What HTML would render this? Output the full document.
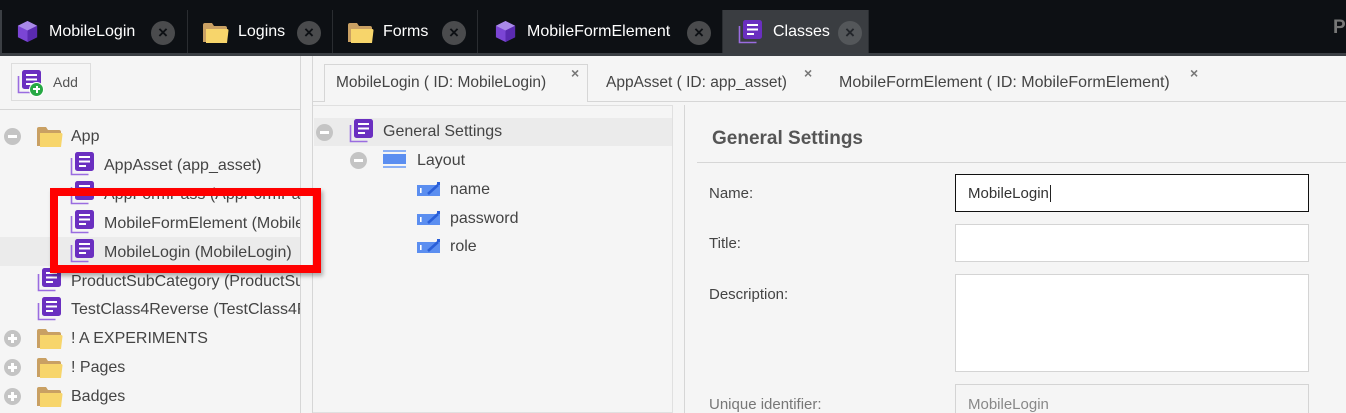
<!DOCTYPE html>
<html><head><meta charset="utf-8">
<style>
*{box-sizing:border-box;margin:0;padding:0}
html,body{width:1346px;height:413px;overflow:hidden}
body{background:#f5f5f5;font-family:"Liberation Sans",sans-serif;position:relative;color:#3c3c3c}
.a{position:absolute}
.top{left:0;top:0;width:1346px;background:#0d1014;border-bottom:3px solid #3b3f44;height:56px}
.tab{top:10px;height:43px;color:#fff;font-size:16px;line-height:43px;border-right:1px solid #2a2d31}
.x{width:24px;height:24px;border-radius:12px;background:#4a4b4d;top:10px;color:#0d1014;font-size:17px;line-height:24px;text-align:center;font-weight:bold}
.t{font-size:16px;color:#444;white-space:nowrap}
.row{font-size:16px;color:#444;white-space:nowrap;line-height:20px}
.lbl{font-size:15px;color:#444;left:709px}
.inp{left:955px;width:354px;background:#fff;border:1px solid #d4d4d4}
.mi{width:17px;height:17px;border-radius:9px;background:#c4c4c4}
.mi:after{content:"";position:absolute;left:4px;top:7px;width:9px;height:3px;background:#fff}
.pl:before{content:"";position:absolute;left:7px;top:4px;width:3px;height:9px;background:#fff}
</style></head><body>
<svg width="0" height="0" style="position:absolute">
<defs>
<symbol id="cls" viewBox="0 0 24 24"><path d="M1.5 6v16.5h17" fill="none" stroke="#9a6ce0" stroke-width="1.6"/><rect x="5" y="0" width="19" height="19" rx="2.5" fill="#6a2fc0"/><rect x="9" y="4" width="11" height="2" fill="#fff"/><rect x="9" y="8.5" width="11" height="2" fill="#fff"/><rect x="9" y="13" width="7" height="2" fill="#fff"/></symbol>
<symbol id="fld" viewBox="0 0 26 22"><path d="M0 3a2 2 0 0 1 2-2h7l2 3h11a2 2 0 0 1 2 2v14H0z" fill="#c9a063"/><path d="M3 7h21a1.5 1.5 0 0 1 1.5 1.5L24 21H3z" fill="#f7d56b"/></symbol>
<symbol id="cube" viewBox="0 0 24 24"><path d="M12 1L22 6v12l-10 5L2 18V6z" fill="#7b45d4"/><path d="M12 1L22 6 12 11 2 6z" fill="#a98ae8"/><path d="M12 11L22 6v12l-10 5z" fill="#5a2ab0"/></symbol>
<symbol id="fe" viewBox="0 0 24 14"><rect x="0" y="3" width="23" height="11" fill="#5b8ef0"/><rect x="3" y="6" width="1.6" height="5" fill="#fff"/><path d="M11 12L21 3" stroke="#2a5fd8" stroke-width="2.6"/><rect x="20" y="0" width="3" height="3" fill="#2a5fd8"/></symbol>
</defs></svg>

<div class="a top"></div>
<div class="a" style="left:0;top:10px;width:2px;height:43px;background:#3b3f44"></div>
<div class="a tab" style="left:0;width:188px"></div>
<svg class="a" style="left:16px;top:20px" width="23" height="23"><use href="#cube"/></svg>
<div class="a tab" style="left:49px;border:0">MobileLogin</div><div class="a x" style="left:151px;top:21px">×</div>
<div class="a tab" style="left:188px;width:145px"></div>
<svg class="a" style="left:203px;top:22px" width="26" height="22"><use href="#fld"/></svg>
<div class="a tab" style="left:238px;border:0">Logins</div><div class="a x" style="left:297px;top:21px">×</div>
<div class="a tab" style="left:333px;width:145px"></div>
<svg class="a" style="left:348px;top:22px" width="26" height="22"><use href="#fld"/></svg>
<div class="a tab" style="left:383px;border:0">Forms</div><div class="a x" style="left:442px;top:21px">×</div>
<div class="a tab" style="left:478px;width:245px"></div>
<svg class="a" style="left:494px;top:20px" width="23" height="23"><use href="#cube"/></svg>
<div class="a tab" style="left:527px;border:0">MobileFormElement</div><div class="a x" style="left:687px;top:21px">×</div>
<div class="a tab" style="left:723px;width:146px;background:#3a3d41"></div>
<svg class="a" style="left:738px;top:20px" width="24" height="24"><use href="#cls"/></svg>
<div class="a tab" style="left:773px;border:0">Classes</div><div class="a x" style="left:838px;top:21px;background:#54575a;color:#22252a">×</div>
<div class="a" style="left:1333px;top:17px;color:#777;font-size:19px;font-weight:bold">P</div>

<!-- left panel -->
<div class="a" style="left:0;top:56px;width:300px;height:357px;overflow:hidden">
<div class="a" style="left:0;top:53px;width:300px;height:1px;background:#d6d6d6"></div>
<div class="a" style="left:11px;top:7px;width:80px;height:38px;border:1px solid #ddd;background:#f5f5f5"></div>
<svg class="a" style="left:17px;top:14px" width="24" height="24"><use href="#cls"/></svg>
<div class="a" style="left:29px;top:26px;width:15px;height:15px;border-radius:8px;background:#27a844;border:1px solid #fff"></div>
<div class="a" style="left:33px;top:32px;width:7px;height:2px;background:#fff"></div><div class="a" style="left:35.5px;top:29.5px;width:2px;height:7px;background:#fff"></div>
<div class="a" style="left:53px;top:18px;font-size:14px;color:#555">Add</div>

<div class="a" style="left:0;top:181px;width:300px;height:29px;background:#ebebeb"></div>
<div class="a mi" style="left:4px;top:72px"></div>
<svg class="a" style="left:37px;top:70px" width="26" height="22"><use href="#fld"/></svg>
<div class="a row" style="left:71px;top:71px">App</div>
<svg class="a" style="left:70px;top:96px" width="24" height="24"><use href="#cls"/></svg>
<div class="a row" style="left:104px;top:100px">AppAsset (app_asset)</div>
<svg class="a" style="left:70px;top:125px" width="24" height="24"><use href="#cls"/></svg>
<div class="a row" style="left:104px;top:129px">AppFormPass (AppFormPass)</div>
<svg class="a" style="left:70px;top:154px" width="24" height="24"><use href="#cls"/></svg>
<div class="a row" style="left:104px;top:158px">MobileFormElement (MobileFormElement)</div>
<svg class="a" style="left:70px;top:183px" width="24" height="24"><use href="#cls"/></svg>
<div class="a row" style="left:104px;top:187px">MobileLogin (MobileLogin)</div>
<svg class="a" style="left:37px;top:212px" width="24" height="24"><use href="#cls"/></svg>
<div class="a row" style="left:71px;top:216px">ProductSubCategory (ProductSubCategory)</div>
<svg class="a" style="left:37px;top:241px" width="24" height="24"><use href="#cls"/></svg>
<div class="a row" style="left:71px;top:244px">TestClass4Reverse (TestClass4Reverse)</div>
<div class="a mi pl" style="left:4px;top:274px"></div>
<svg class="a" style="left:37px;top:272px" width="26" height="22"><use href="#fld"/></svg>
<div class="a row" style="left:71px;top:273px">! A EXPERIMENTS</div>
<div class="a mi pl" style="left:4px;top:303px"></div>
<svg class="a" style="left:37px;top:301px" width="26" height="22"><use href="#fld"/></svg>
<div class="a row" style="left:71px;top:302px">! Pages</div>
<div class="a mi pl" style="left:4px;top:332px"></div>
<svg class="a" style="left:37px;top:330px" width="26" height="22"><use href="#fld"/></svg>
<div class="a row" style="left:71px;top:331px">Badges</div>
</div>
<div class="a" style="left:300px;top:56px;width:1px;height:357px;background:#d6d6d6"></div>
<div class="a" style="left:312px;top:56px;width:1px;height:357px;background:#d6d6d6"></div>

<!-- red box -->
<div class="a" style="left:50px;top:188px;width:271px;height:85px;border:8px solid #f00;box-shadow:2px 3px 4px rgba(0,0,0,.3)"></div>

<!-- middle tabs -->
<div class="a" style="left:313px;top:101px;width:1033px;height:1px;background:#d6d6d6"></div>
<div class="a" style="left:324px;top:64px;width:264px;height:38px;border:1px solid #d6d6d6;border-bottom:0;background:#f5f5f5"></div>
<div class="a t" style="left:336px;top:74px;font-size:15.5px">MobileLogin ( ID: MobileLogin)</div>
<div class="a" style="left:571px;top:65px;font-size:14px;color:#777;font-weight:bold">×</div>
<div class="a t" style="left:606px;top:74px;font-size:15.5px">AppAsset ( ID: app_asset)</div>
<div class="a" style="left:804px;top:65px;font-size:14px;color:#777;font-weight:bold">×</div>
<div class="a t" style="left:839px;top:74px;font-size:16px">MobileFormElement ( ID: MobileFormElement)</div>
<div class="a" style="left:1190px;top:65px;font-size:14px;color:#777;font-weight:bold">×</div>

<!-- middle tree -->
<div class="a" style="left:313px;top:105px;width:360px;height:308px;border:1px solid #e0e0e0;border-left:0"></div>
<div class="a" style="left:684px;top:105px;width:1px;height:308px;background:#d6d6d6"></div>
<div class="a" style="left:314px;top:118px;width:358px;height:28px;background:#ebebeb"></div>
<div class="a mi" style="left:316px;top:124px"></div>
<svg class="a" style="left:349px;top:119px" width="24" height="24"><use href="#cls"/></svg>
<div class="a row" style="left:383px;top:122px">General Settings</div>
<div class="a mi" style="left:350px;top:152px"></div>
<div class="a" style="left:383px;top:150px;width:23px;height:2px;background:#8bb0f5"></div>
<div class="a" style="left:383px;top:154px;width:23px;height:10px;background:#5b8ef0"></div>
<div class="a" style="left:383px;top:166px;width:23px;height:2px;background:#8bb0f5"></div>
<div class="a row" style="left:417px;top:151px">Layout</div>
<svg class="a" style="left:417px;top:182px" width="24" height="14"><use href="#fe"/></svg>
<div class="a row" style="left:450px;top:180px">name</div>
<svg class="a" style="left:417px;top:211px" width="24" height="14"><use href="#fe"/></svg>
<div class="a row" style="left:450px;top:209px">password</div>
<svg class="a" style="left:417px;top:239px" width="24" height="14"><use href="#fe"/></svg>
<div class="a row" style="left:450px;top:237px">role</div>

<!-- right -->
<div class="a" style="left:712px;top:128px;font-size:19px;font-weight:bold;color:#555">General Settings</div>
<div class="a" style="left:697px;top:162px;width:649px;height:1px;background:#d6d6d6"></div>
<div class="a lbl" style="top:185px">Name:</div>
<div class="a inp" style="top:174px;height:38px;border:1px solid #111"></div>
<div class="a" style="left:968px;top:185px;font-size:15px;color:#333"><span style="border-right:1px solid #222;padding-right:1px">MobileLogin</span></div>
<div class="a lbl" style="top:235px">Title:</div>
<div class="a inp" style="top:224px;height:38px"></div>
<div class="a lbl" style="top:286px">Description:</div>
<div class="a inp" style="top:274px;height:98px"></div>
<div class="a lbl" style="top:396px;color:#777">Unique identifier:</div>
<div class="a inp" style="top:384px;height:40px;background:#f5f5f5"></div>
<div class="a" style="left:968px;top:396px;font-size:15px;color:#888">MobileLogin</div>
</body></html>
